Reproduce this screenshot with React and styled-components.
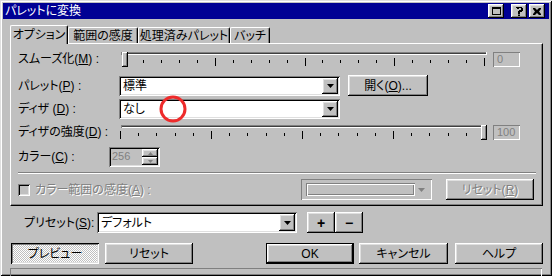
import React from 'react';
import styled, { createGlobalStyle, css } from 'styled-components';

const FONT = `"Liberation Sans", "Noto Sans CJK JP", sans-serif`;

const Global = createGlobalStyle`
  html, body { margin: 0; padding: 0; background: #c0c0c0; }
  body { font-family: ${FONT}; font-size: 12px; color: #000; font-feature-settings: "palt"; }
  * { box-sizing: border-box; }
`;

const raised = css`
  box-shadow: inset -1px -1px #000, inset 1px 1px #fff, inset -2px -2px #808080, inset 2px 2px #dfdfdf;
`;
const sunken = css`
  box-shadow: inset 1px 1px #808080, inset -1px -1px #fff, inset 2px 2px #000, inset -2px -2px #dfdfdf;
`;
const thinSunken = css`
  box-shadow: inset 1px 1px #808080, inset -1px -1px #fff;
`;

const Window = styled.div`
  position: relative;
  width: 552px;
  height: 276px;
  padding: 3px;
  background: #c0c0c0;
  overflow: hidden;
  display: flex;
  flex-direction: column;
  box-shadow: inset 1px 1px #dfdfdf, inset -1px -1px #000, inset 2px 2px #fff, inset -2px -2px #808080;
`;

const TitleBar = styled.div`
  height: 16px;
  flex-shrink: 0;
  background: #000094;
  color: #fff;
  display: flex;
  align-items: center;
  padding: 0 4px 0 2px;
`;

const TitleText = styled.span`
  line-height: 14px;
  font-size: 12px;
`;

const TitleButtons = styled.div`
  margin-left: auto;
  display: flex;
  align-items: center;
`;

const CapBtn = styled.div`
  width: 16px;
  height: 14px;
  margin-left: ${p => p.$ml || 0}px;
  background: #c0c0c0;
  ${raised};
  display: flex;
  align-items: center;
  justify-content: center;
  color: #000;
`;

const Body = styled.div`
  flex: 1;
  padding: 6px 0 0 7px;
  display: flex;
  flex-direction: column;
`;

const TabStrip = styled.div`
  height: 18px;
  display: flex;
  align-items: flex-end;
  position: relative;
  z-index: 2;
`;

const Tab = styled.div`
  width: ${p => p.$w}px;
  height: ${p => (p.$active ? 19 : 16)}px;
  margin-bottom: ${p => (p.$active ? -1 : 0)}px;
  background: #c0c0c0;
  border-left: 1px solid #fff;
  border-top: 1px solid #fff;
  border-right: 1px solid #000;
  border-radius: 2px 2px 0 0;
  box-shadow: inset -1px 0 #808080;
  display: flex;
  align-items: ${p => (p.$active ? 'flex-start' : 'center')};
  padding-top: ${p => (p.$active ? 2 : 0)}px;
  justify-content: center;
  white-space: nowrap;
  line-height: 14px;
`;

const Panel = styled.div`
  width: 533px;
  height: 163px;
  border: 1px solid;
  border-color: #fff #000 #000 #fff;
  box-shadow: inset -1px -1px #808080;
  padding: 7px 0 0 7px;
  position: relative;
  z-index: 1;
`;

const Row = styled.div`
  display: flex;
  align-items: center;
  height: ${p => p.$h}px;
  margin-top: ${p => p.$mt || 0}px;
  margin-left: ${p => p.$ml || 0}px;
`;

const Label = styled.div`
  width: ${p => p.$w}px;
  margin-left: ${p => p.$ml || 0}px;
  flex-shrink: 0;
  white-space: nowrap;
  line-height: 14px;
  color: ${p => (p.$disabled ? '#808080' : '#000')};
  text-shadow: ${p => (p.$disabled ? '1px 1px 0 #fff' : 'none')};
  u { text-decoration-thickness: 1px; text-underline-offset: 1px; }
`;

const Edit = styled.div`
  width: ${p => p.$w}px;
  height: 15px;
  margin-left: ${p => p.$ml || 0}px;
  ${thinSunken};
  color: #808080;
  font-size: 11px;
  line-height: 13px;
  padding: 1px 0 0 4px;
`;

const Combo = styled.div`
  width: ${p => p.$w}px;
  height: ${p => p.$h || 20}px;
  margin-left: ${p => p.$ml || 0}px;
  background: #fff;
  ${sunken};
  display: flex;
  align-items: center;
  padding: 2px;
`;

const ComboText = styled.span`
  flex: 1;
  padding-left: 2px;
  line-height: 14px;
  white-space: nowrap;
`;

const DropBtn = styled.div`
  width: 16px;
  height: 100%;
  background: #c0c0c0;
  ${raised};
  display: flex;
  align-items: center;
  justify-content: center;
`;

const Button = styled.div`
  width: ${p => p.$w}px;
  height: ${p => p.$h || 21}px;
  margin-left: ${p => p.$ml || 0}px;
  flex-shrink: 0;
  background: #c0c0c0;
  ${raised};
  display: flex;
  align-items: center;
  justify-content: center;
  white-space: nowrap;
  line-height: 14px;
  color: ${p => (p.$disabled ? '#808080' : '#000')};
  text-shadow: ${p => (p.$disabled ? '1px 1px 0 #fff' : 'none')};
  ${p => p.$default && css`
    border: 1px solid #000;
  `}
  ${p => p.$pressed && css`
    box-shadow: inset 1px 1px #000, inset -1px -1px #fff, inset 2px 2px #808080, inset -2px -2px #dfdfdf;
    background-image: conic-gradient(#fff 25%, #c0c0c0 0 50%, #fff 0 75%, #c0c0c0 0);
    background-size: 2px 2px;
  `}
`;

const Spin = styled.div`
  width: 51px;
  height: 20px;
  margin-left: ${p => p.$ml || 0}px;
  ${sunken};
  display: flex;
  padding: 2px;
`;

const SpinValue = styled.span`
  flex: 1;
  color: #808080;
  font-size: 11px;
  line-height: 15px;
  padding-left: 1px;
`;

const SpinArrows = styled.div`
  width: 16px;
  display: flex;
  flex-direction: column;
`;

const SpinBtn = styled.div`
  flex: 1;
  background: #c0c0c0;
  ${raised};
  display: flex;
  align-items: center;
  justify-content: center;
`;

const Separator = styled.div`
  width: 518px;
  height: 2px;
  margin-top: ${p => p.$mt}px;
  border-top: 1px solid #808080;
  border-bottom: 1px solid #fff;
`;

const Check = styled.div`
  width: 12px;
  height: 12px;
  flex-shrink: 0;
  ${sunken};
  background: #c0c0c0;
`;

const ColorPick = styled.div`
  width: 131px;
  height: 21px;
  margin-left: ${p => p.$ml || 0}px;
  ${thinSunken};
  display: flex;
  align-items: center;
  padding: 0 4px 0 5px;
`;

const Swatch = styled.div`
  width: 109px;
  height: 13px;
  box-shadow: inset 1px 1px #808080, inset -1px -1px #fff, inset 2px 2px #fff, inset -2px -2px #808080;
`;

const SwatchArrow = styled.div`
  flex: 1;
  display: flex;
  justify-content: center;
`;

const SmallBtn = styled.div`
  width: 28px;
  height: 21px;
  margin-left: ${p => p.$ml || 0}px;
  background: #c0c0c0;
  ${raised};
  display: flex;
  align-items: center;
  justify-content: center;
  font-weight: bold;
  font-size: 14px;
`;

const StatusBox = styled.div`
  width: 532px;
  height: 8px;
  margin-top: 4px;
  box-shadow: inset 1px 1px #808080, inset -1px 0 #fff;
`;

const Marker = styled.svg`
  position: absolute;
  left: 159px;
  top: 95px;
  z-index: 10;
  pointer-events: none;
`;

const Down = ({ color = '#000' }) => (
  <svg width="7" height="4" viewBox="0 0 7 4"><path d="M0 0h7L3.5 4z" fill={color} /></svg>
);

function Slider({ start, step, pos }) {
  const W = 370;
  const ox = 119;
  const ticks = [];
  for (let k = 0; k <= 20; k++) {
    const x = Math.round(start + k * step) - ox + 0.5;
    const long = k % 5 === 0;
    ticks.push(<line key={k} x1={x} x2={x} y1={long ? 7 : 9} y2={long ? 15 : 12} stroke="#000" strokeWidth="1" />);
  }
  const tx = pos - ox - 3;
  return (
    <svg width={W} height="16" viewBox={`0 0 ${W} 16`} style={{ flexShrink: 0, display: 'block' }}>
      <rect x="3" y="1" width="364" height="1" fill="#808080" />
      <rect x="3" y="2" width="364" height="1" fill="#404040" />
      <rect x="3" y="3" width="364" height="1" fill="#fff" />
      <rect x="2" y="1" width="1" height="3" fill="#808080" />
      <rect x="367" y="1" width="1" height="3" fill="#fff" />
      {ticks}
      <rect x={tx} y="1" width="6" height="15" fill="#c0c0c0" />
      <rect x={tx} y="1" width="5" height="1" fill="#fff" />
      <rect x={tx} y="1" width="1" height="14" fill="#fff" />
      <rect x={tx + 5} y="1" width="1" height="15" fill="#000" />
      <rect x={tx} y="15" width="6" height="1" fill="#000" />
      <rect x={tx + 4} y="2" width="1" height="13" fill="#808080" />
      <rect x={tx + 1} y="14" width="4" height="1" fill="#808080" />
    </svg>
  );
}

export default function App() {
  return (
    <>
      <Global />
      <Window>
        <TitleBar>
          <TitleText>パレットに変換</TitleText>
          <TitleButtons>
            <CapBtn>
              <svg width="9" height="8" viewBox="0 0 9 8"><path d="M0 0h9v8H0z M1 2v5h7V2z" fill="#000" fillRule="evenodd" /></svg>
            </CapBtn>
            <CapBtn $ml={7}>
              <svg width="7" height="9" viewBox="0 0 7 9"><path d="M1 0h5v1h1v3h-1v1h-2v2h-2v-3h1v-1h2v-2h-2v1h-2v-1h-1v-1h1z M2 7.5h2v1.5h-2z" fill="#000" /></svg>
            </CapBtn>
            <CapBtn $ml={2}>
              <svg width="8" height="7" viewBox="0 0 8 7"><path d="M0 0h2l2 2 2-2h2v1l-2 2.5 2 2.5v1h-2l-2-2-2 2h-2v-1l2-2.5-2-2.5z" fill="#000" /></svg>
            </CapBtn>
          </TitleButtons>
        </TitleBar>
        <Body>
          <TabStrip>
            <Tab $w={58} $active>オプション</Tab>
            <Tab $w={70}>範囲の感度</Tab>
            <Tab $w={92}>処理済みパレット</Tab>
            <Tab $w={40}>バッチ</Tab>
          </TabStrip>
          <Panel>
            <Row $h={16}>
              <Label $w={101}>スムーズ化(<u>M</u>) :</Label>
              <Slider start={125} step={17.95} pos={125} />
              <Edit $w={27} $ml={4}>0</Edit>
            </Row>
            <Row $h={21} $mt={8}>
              <Label $w={101}>パレット(<u>P</u>) :</Label>
              <Combo $w={221}>
                <ComboText>標準</ComboText>
                <DropBtn><Down /></DropBtn>
              </Combo>
              <Button $w={80} $ml={8}>開く(<u>O</u>)...</Button>
            </Row>
            <Row $h={20} $mt={3}>
              <Label $w={101}>ディザ (<u>D</u>) :</Label>
              <Combo $w={221}>
                <ComboText>なし</ComboText>
                <DropBtn><Down /></DropBtn>
              </Combo>
            </Row>
            <Row $h={16} $mt={5}>
              <Label $w={101}>ディザの強度(<u>D</u>) :</Label>
              <Slider start={120} step={18.2} pos={484} />
              <Edit $w={27} $ml={4}>100</Edit>
            </Row>
            <Row $h={20} $mt={7}>
              <Label $w={91}>カラー(<u>C</u>) :</Label>
              <Spin>
                <SpinValue>256</SpinValue>
                <SpinArrows>
                  <SpinBtn><svg width="5" height="3" viewBox="0 0 5 3"><path d="M2.5 0L5 3H0z" fill="#808080" /></svg></SpinBtn>
                  <SpinBtn><svg width="5" height="3" viewBox="0 0 5 3"><path d="M0 0h5L2.5 3z" fill="#808080" /></svg></SpinBtn>
                </SpinArrows>
              </Spin>
            </Row>
            <Separator $mt={5} />
            <Row $h={21} $mt={5}>
              <Check />
              <Label $w={266} $ml={5} $disabled>カラー範囲の感度(<u>A</u>) :</Label>
              <ColorPick>
                <Swatch />
                <SwatchArrow><Down color="#808080" /></SwatchArrow>
              </ColorPick>
              <Button $w={88} $ml={14} $disabled>リセット(<u>R</u>)</Button>
            </Row>
          </Panel>
          <Row $h={23} $mt={5}>
            <Label $w={73} $ml={14}>プリセット(<u>S</u>):</Label>
            <Combo $w={200} $h={21}>
              <ComboText>デフォルト</ComboText>
              <DropBtn><Down /></DropBtn>
            </Combo>
            <SmallBtn $ml={10}>+</SmallBtn>
            <SmallBtn>−</SmallBtn>
          </Row>
          <Row $h={21} $mt={9}>
            <Button $w={88} $ml={1} $pressed>プレビュー</Button>
            <Button $w={88} $ml={6}>リセット</Button>
            <Button $w={88} $ml={73} $default>OK</Button>
            <Button $w={89} $ml={5}>キャンセル</Button>
            <Button $w={88} $ml={7}>ヘルプ</Button>
          </Row>
          <StatusBox />
        </Body>
        <Marker width="28" height="28" viewBox="0 0 28 28">
          <circle cx="14" cy="14" r="12" fill="none" stroke="#ee2b2b" strokeWidth="3" />
        </Marker>
      </Window>
    </>
  );
}
